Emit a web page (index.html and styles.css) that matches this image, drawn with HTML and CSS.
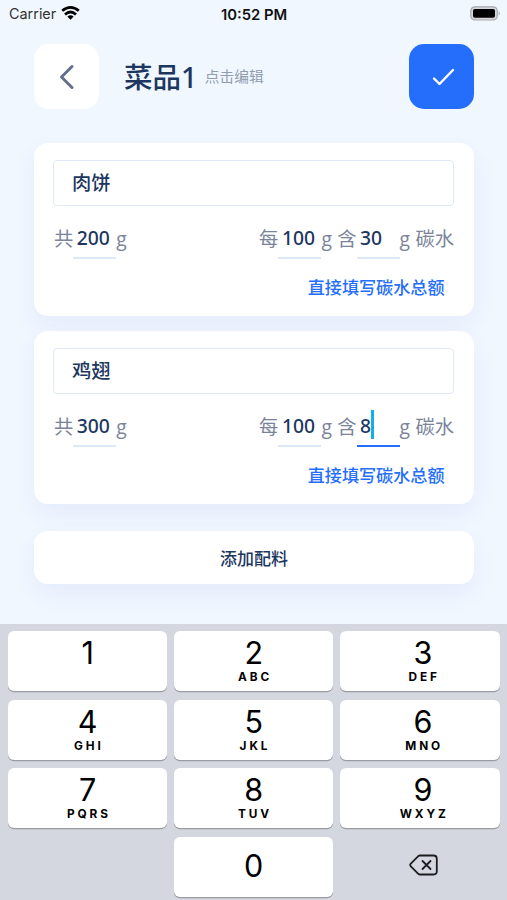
FILE: index.html
```html
<!DOCTYPE html>
<html lang="zh-CN">
<head>
<meta charset="utf-8">
<meta name="viewport" content="width=device-width, initial-scale=1">
<title>菜品1</title>
<link rel="stylesheet" href="styles.css">
</head>
<body>
<div class="app">
  <div class="status">
    <div class="carrier">Carrier
      <svg width="19" height="14" viewBox="0 0 19 14" fill="none" stroke="#000" stroke-width="2.7"><path d="M1.2 4.8Q9.5-2 17.8 4.8M4 8.4Q9.5 3.6 15 8.4"/><path d="M6.3 10.6Q9.5 7.8 12.7 10.6L9.5 13.8Z" fill="#000" stroke="none"/></svg>
    </div>
    <div class="time">10:52 PM</div>
    <svg class="battery" width="31" height="15" viewBox="0 0 31 15"><rect x=".8" y=".8" width="26.4" height="13.2" rx="4" fill="#d4d8dd" stroke="#a5a9ae" stroke-width="1.2"/><rect x="3" y="3" width="22" height="8.8" rx="1.8"/><path d="M28.6 5Q31 7.4 28.6 9.8Z" fill="#a5a9ae"/></svg>
  </div>

  <header class="header">
    <button class="square" aria-label="返回"><svg width="65" height="65" viewBox="0 0 65 65" fill="none" stroke="#646f8b" stroke-width="3" stroke-linecap="round" stroke-linejoin="round"><path d="M38 22.5 27.5 33 38 43.5"/></svg></button>
    <h1 class="title">菜品1</h1>
    <span class="hint">点击编辑</span>
    <button class="square confirm" aria-label="完成"><svg width="65" height="65" viewBox="0 0 65 65" fill="none" stroke="#fff" stroke-width="2.4" stroke-linecap="round" stroke-linejoin="round"><path d="M25 34.5 30.5 40 44 26"/></svg></button>
  </header>

  <main class="content">
    <section class="card">
      <div class="name">肉饼</div>
      <div class="amounts">
        <div class="group">共<span class="field">200</span>g</div>
        <div class="group">每<span class="field">100</span>g 含<span class="field">30</span>g 碳水</div>
      </div>
      <a class="link">直接填写碳水总额</a>
    </section>
    <section class="card">
      <div class="name">鸡翅</div>
      <div class="amounts">
        <div class="group">共<span class="field">300</span>g</div>
        <div class="group">每<span class="field">100</span>g 含<span class="field active">8<i class="caret"></i></span>g 碳水</div>
      </div>
      <a class="link">直接填写碳水总额</a>
    </section>
    <button class="add">添加配料</button>
  </main>

  <div class="keyboard">
    <div class="key"><b>1</b><small></small></div>
    <div class="key"><b>2</b><small>ABC</small></div>
    <div class="key"><b>3</b><small>DEF</small></div>
    <div class="key"><b>4</b><small>GHI</small></div>
    <div class="key"><b>5</b><small>JKL</small></div>
    <div class="key"><b>6</b><small>MNO</small></div>
    <div class="key"><b>7</b><small>PQRS</small></div>
    <div class="key"><b>8</b><small>TUV</small></div>
    <div class="key"><b>9</b><small>WXYZ</small></div>
    <div></div>
    <div class="key zero"><b>0</b></div>
    <div class="erase"><svg width="29" height="22" viewBox="0 0 29 22" fill="none" stroke="#1c1d20" stroke-width="1.8" stroke-linecap="round" stroke-linejoin="round"><path d="M11 1.5H24.5Q27.8 1.5 27.8 5V17Q27.8 20.5 24.5 20.5H11Q10 20.5 9.3 19.8L1.8 12.3Q.6 11 1.8 9.7L9.3 2.2Q10 1.5 11 1.5Z"/><path d="M13.5 7 21.5 15M21.5 7 13.5 15"/></svg></div>
  </div>
</div>
</body>
</html>
```

FILE: styles.css
```css
* { box-sizing: border-box; }
body {
  margin: 0;
  background: #f0f7ff;
  font-family: "Open Sans", "Noto Sans CJK SC", sans-serif;
  color: #1c365f;
}
button { border: 0; padding: 0; font: inherit; color: inherit; }
.app {
  width: 507px;
  height: 900px;
  display: flex;
  flex-direction: column;
  overflow: hidden;
}
.status {
  height: 27px;
  flex: none;
  display: grid;
  grid-template-columns: 1fr auto 1fr;
  grid-template-rows: 27px;
  align-items: center;
  padding: 0 6px 0 9px;
  font: 14.4px/27px Inter, sans-serif;
  color: #111;
}
.carrier { display: flex; align-items: center; gap: 5px; color: #333; }
.carrier svg { margin-top: -2px; }
.time { font-weight: 600; font-size: 14.8px; line-height: 26px; padding: 2px 2px 0 0; }
.battery { justify-self: end; }
.header {
  flex: none;
  display: flex;
  align-items: center;
  height: 65px;
  margin: 16.5px 33px 0 34px;
}
.square {
  width: 65px;
  height: 65px;
  border-radius: 15px;
  background: #fff;
}
.square svg { display: block; }
.confirm { margin-left: auto; background: #256efc; }
.title {
  margin: 2px 0 0 25px;
  font-family: "Noto Sans", "Noto Sans CJK SC", sans-serif;
  font-size: 28.5px;
  line-height: 40px;
  font-weight: 500;
}
.hint { margin: -2px 0 0 7.5px; font-size: 14.7px; color: #919bb0; }
.content { flex: none; height: 515.5px; padding: 34.5px 33px 0 34px; }
.card {
  height: 173px;
  margin-bottom: 15px;
  padding: 17px 20px 0 19px;
  border-radius: 14px;
  background: #fff;
  box-shadow: 0 10px 24px rgba(63, 75, 180, .06);
}
.name {
  height: 46px;
  border: 1.5px solid #e1e8f8;
  border-radius: 4px;
  padding-left: 18px;
  font-size: 19.3px;
  line-height: 43px;
  font-weight: 500;
}
.amounts {
  display: flex;
  justify-content: space-between;
  margin-top: 11px;
  padding-left: 1px;
  font-size: 19.3px;
  line-height: 44px;
  color: #7b849a;
}
.group { display: flex; white-space: pre; word-spacing: .4px; }
.field {
  display: flex;
  align-items: center;
  width: 43px;
  height: 42px;
  padding: 2px 0 0 3.5px;
  border-bottom: 2.5px solid #dfe8f8;
  color: #1c365f;
  font-family: "Noto Sans", sans-serif;
  font-weight: 500;
}
.active { border-color: #256efc; }
.caret { width: 3px; height: 29px; background: #14afe9; margin-top: -4px; }
.link {
  display: block;
  margin: 14px 9.5px 0 0;
  text-align: right;
  font-size: 17.1px;
  line-height: 26px;
  font-weight: 500;
  color: #256efc;
}
.add {
  display: block;
  width: 100%;
  height: 53px;
  margin-top: 27px;
  border-radius: 14px;
  background: #fff;
  box-shadow: 0 10px 24px rgba(63, 75, 180, .06);
  font-size: 17px;
  font-weight: 500;
}
.keyboard {
  flex: 1;
  display: grid;
  grid-template-columns: repeat(3, 1fr);
  grid-auto-rows: 60px;
  gap: 8.6px 7px;
  padding: 7px 7.5px 0 8px;
  background: #d4d7df;
  color: #000;
  font-family: Inter, sans-serif;
}
.key {
  display: flex;
  flex-direction: column;
  align-items: center;
  padding-top: 3px;
  border-radius: 6px;
  background: #fff;
  box-shadow: 0 1.3px 0 #999ca2;
}
.key:nth-child(3n) { padding-left: 6px; }
.key b { font-size: 30.5px; line-height: 37px; font-weight: 400; }
.key small {
  margin-top: -1px;
  padding-left: 2.5px;
  font-size: 11.8px;
  line-height: 14px;
  font-weight: 700;
  letter-spacing: 2.9px;
}
.key.zero { padding-top: 10px; }
.erase { display: flex; align-items: center; justify-content: center; padding: 0 0 3px 7px; }
```
